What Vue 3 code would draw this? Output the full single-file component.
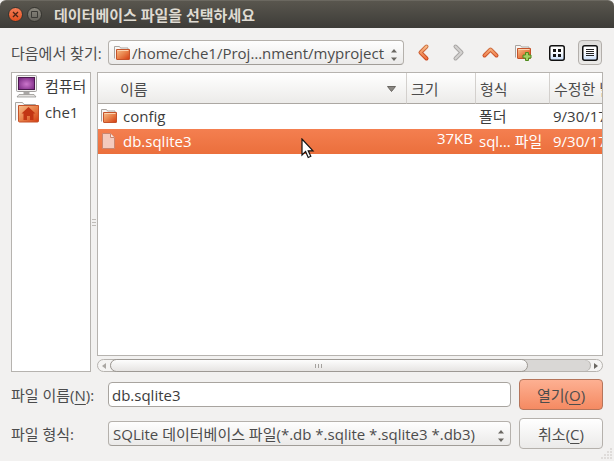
<script setup>
import { ref } from 'vue'

const fileName = ref('db.sqlite3')
const folder = ref('project')
const filter = ref('sqlite')
const selected = ref('db.sqlite3')
const files = [
  { name: 'config', size: '', type: '폴더', date: '9/30/17 2:10 PM', dir: true },
  { name: 'db.sqlite3', size: '37KB', type: 'sql… 파일', date: '9/30/17 2:10 PM', dir: false }
]

function choose(file) {
  selected.value = file.name
  fileName.value = file.name
}
</script>

<template>
  <div class="window">
    <svg class="defs" width="0" height="0" aria-hidden="true">
      <defs>
        <linearGradient id="chevron" gradientUnits="userSpaceOnUse" x1="0" y1="1" x2="0" y2="15">
          <stop offset="0" stop-color="#f9c08c" />
          <stop offset="1" stop-color="#ee6a38" />
        </linearGradient>
        <linearGradient id="chevronEdge" gradientUnits="userSpaceOnUse" x1="0" y1="1" x2="0" y2="15">
          <stop offset="0" stop-color="#cf7546" />
          <stop offset="1" stop-color="#c8431c" />
        </linearGradient>
        <linearGradient id="folderFill" x1="0" y1="0" x2="1" y2="1">
          <stop offset="0" stop-color="#f7bf8c" />
          <stop offset="0.5" stop-color="#e8824a" />
          <stop offset="1" stop-color="#d33a10" />
        </linearGradient>
        <radialGradient id="screen" cx="0.5" cy="0.55" r="0.6">
          <stop offset="0" stop-color="#cc76cc" />
          <stop offset="1" stop-color="#7d2c86" />
        </radialGradient>
        <linearGradient id="page" x1="0" y1="0" x2="0" y2="1">
          <stop offset="0.4" stop-color="#ffffff" />
          <stop offset="1" stop-color="#c9defa" />
        </linearGradient>
        <symbol id="folder" viewBox="0 0 16 16">
          <path d="M.5 13.500v-12h5l1 1.500h7.500v1.500" fill="#f7f6f5" stroke="#a9a5a1" />
          <path d="M2.500 4.500h13v9.500q0 .5-.5.5h-12q-.5 0-.5-.5z" fill="url(#folderFill)" stroke="#c5532a" />
          <path d="M3.500 5.500h11" stroke="#fbd3b0" />
        </symbol>
      </defs>
    </svg>

    <header class="titlebar">
      <button class="dot close" type="button" aria-label="닫기">
        <svg width="7" height="7" viewBox="0 0 7 7"><path d="M1 1l5 5M6 1l-5 5" stroke="#4b2416" stroke-width="1.300" /></svg>
      </button>
      <button class="dot maximize" type="button" aria-label="최대화">
        <svg width="7" height="7" viewBox="0 0 7 7"><path d="M.5.5h6v6h-6z" fill="none" stroke="#3c3b37" /></svg>
      </button>
      <h1>데이터베이스 파일을 선택하세요</h1>
    </header>

    <div class="toolbar">
      <label class="caption" for="folder-select">다음에서 찾기:</label>
      <div class="combo path">
        <svg class="lead" width="16" height="16"><use href="#folder" /></svg>
        <select id="folder-select" v-model="folder">
          <option value="project">/home/che1/Proj…nment/myproject</option>
        </select>
        <svg class="arrows" width="6" height="12" viewBox="0 0 6 12"><path d="M0 3.500L3 0l3 3.500zM0 8.500h6L3 12z" fill="#6a6762" /></svg>
      </div>
      <button class="tool" type="button" aria-label="뒤로">
        <svg width="16" height="16" viewBox="0 0 16 16"><path d="M9.500 1.500L3.500 7.500l6 6" class="edge back" /><path d="M9.500 1.500L3.500 7.500l6 6" class="core back" /></svg>
      </button>
      <button class="tool" type="button" aria-label="앞으로">
        <svg width="16" height="16" viewBox="0 0 16 16"><path d="M5.500 1.500L11.500 7.500l-6 6" class="edge next" /><path d="M5.500 1.500L11.500 7.500l-6 6" class="core next" /></svg>
      </button>
      <button class="tool" type="button" aria-label="상위 폴더">
        <svg width="16" height="16" viewBox="0 0 16 16"><path d="M1.500 10.500L7.500 4.500l6 6" class="edge back" /><path d="M1.500 10.500L7.500 4.500l6 6" class="core back" /></svg>
      </button>
      <button class="tool" type="button" aria-label="새 폴더">
        <svg width="18" height="18" viewBox="0 0 18 18">
          <use href="#folder" width="16" height="16" />
          <path d="M10.500 8.500h3v2.500h2.500v3h-2.500v2.500h-3V14H8v-3h2.500z" fill="#a3cf65" stroke="#4f8a1c" />
        </svg>
      </button>
      <button class="tool" type="button" aria-label="아이콘 보기">
        <svg width="16" height="16" viewBox="0 0 16 16">
          <rect x=".75" y=".75" width="14.500" height="14.500" rx="2" fill="url(#page)" stroke="#111" stroke-width="1.500" />
          <path d="M4 4h3v3H4zM9 4h3v3H9zM4 9h3v3H4zM9 9h3v3H9z" fill="#151515" />
        </svg>
      </button>
      <button class="tool pressed" type="button" aria-label="자세히 보기" aria-pressed="true">
        <svg width="16" height="16" viewBox="0 0 16 16">
          <rect x=".75" y=".75" width="14.500" height="14.500" rx="2" fill="url(#page)" stroke="#111" stroke-width="1.500" />
          <path d="M4 4.500h8M4 6.500h8M4 8.500h8M4 10.500h8" stroke="#222" />
        </svg>
      </button>
    </div>

    <main class="browser">
      <nav class="places">
        <a href="#computer">
          <svg width="24" height="24" viewBox="0 0 24 24">
            <rect x="1.500" y="1.500" width="20" height="16" rx="1" fill="#f1f0ef" stroke="#a3a19f" />
            <rect x="3.500" y="3.500" width="16" height="12" fill="url(#screen)" stroke="#4b174f" />
            <path d="M8.500 18h6v2.500h-6z" fill="#a9a7a5" />
            <path d="M4 20.500h15l2 2.500H2z" fill="#e4e2e0" stroke="#8b8987" stroke-width=".7" />
          </svg>
          <span>컴퓨터</span>
        </a>
        <a href="#home">
          <svg width="24" height="24" viewBox="0 0 24 24">
            <path d="M.5 20.500v-18h7l1.500 2h11.500v3" fill="#f7f6f5" stroke="#a9a5a1" />
            <path d="M3.500 5.500h20V21q0 1-1 1h-18q-1 0-1-1z" fill="url(#folderFill)" stroke="#c5532a" />
            <path d="M13.500 7l7 6.500h-2V20h-3.500v-4h-3v4H8.500v-6.500h-2z" fill="#c23514" />
          </svg>
          <span>che1</span>
        </a>
      </nav>
      <div class="splitter" role="separator"><i></i><i></i><i></i></div>
      <section class="listing">
        <div class="view">
          <table>
            <colgroup><col /><col class="c-size" /><col class="c-type" /><col class="c-date" /></colgroup>
            <thead>
              <tr>
                <th class="first">
                  <div class="sort">이름
                    <svg width="9" height="6" viewBox="0 0 9 6"><path d="M.5.5h8L4.500 5.500z" fill="#8a8783" stroke="#6a6762" /></svg>
                  </div>
                </th>
                <th>크기</th>
                <th>형식</th>
                <th>수정한 날짜</th>
              </tr>
            </thead>
            <tbody>
              <tr v-for="file in files" :key="file.name" :class="{ active: selected === file.name }" @click="choose(file)">
                <td>
                  <div class="entry">
                    <svg v-if="file.dir" width="16" height="16"><use href="#folder" /></svg>
                    <svg v-else width="16" height="16" viewBox="0 0 16 16">
                      <path d="M1.500.5h8l4 4v11h-12z" fill="#f4cabd" stroke="#c98670" />
                      <path d="M9.500.5v4h4" fill="#fae5de" stroke="#c98670" />
                    </svg>
                    <span>{{ file.name }}</span>
                  </div>
                </td>
                <td class="size">{{ file.size }}</td>
                <td>{{ file.type }}</td>
                <td>{{ file.date }}</td>
              </tr>
            </tbody>
          </table>
        </div>
        <div class="scrollbar">
          <button type="button" aria-label="왼쪽"><svg width="4" height="6" viewBox="0 0 4 6"><path d="M4 0v6L0 3z" fill="#aaa7a3" /></svg></button>
          <div class="trough"><div class="thumb"><i></i><i></i><i></i></div></div>
          <button type="button" aria-label="오른쪽"><svg width="4" height="6" viewBox="0 0 4 6"><path d="M0 0v6l4-3z" fill="#6a6762" /></svg></button>
        </div>
      </section>
    </main>

    <form class="form" @submit.prevent>
      <label class="caption" for="file-name">파일 이름(<u>N</u>):</label>
      <input id="file-name" v-model="fileName" type="text" autocomplete="off" spellcheck="false" />
      <button class="action open" type="submit">열기(<u>O</u>)</button>
      <label class="caption" for="file-type">파일 형식:</label>
      <div class="combo">
        <select id="file-type" v-model="filter">
          <option value="sqlite">SQLite 데이터베이스 파일(*.db *.sqlite *.sqlite3 *.db3)</option>
        </select>
        <svg class="arrows" width="6" height="12" viewBox="0 0 6 12"><path d="M0 3.500L3 0l3 3.500zM0 8.500h6L3 12z" fill="#6a6762" /></svg>
      </div>
      <button class="action" type="button">취소(<u>C</u>)</button>
    </form>

    <svg class="grip" width="12" height="12" viewBox="0 0 12 12" aria-hidden="true">
      <path d="M9 1h2v2H9zM6 4h2v2H6zM9 4h2v2H9zM3 7h2v2H3zM6 7h2v2H6zM9 7h2v2H9zM0 10h2v2H0zM3 10h2v2H3zM6 10h2v2H6zM9 10h2v2H9z" fill="#dfdcda" />
    </svg>
    <svg class="pointer" width="14" height="21" viewBox="0 0 14 21" aria-hidden="true">
      <path d="M1 1v16l3.600-3.400L7.200 19.500l2.600-1.200-2.600-5.500H12z" fill="#fff" stroke="#111" stroke-width="1.200" />
    </svg>
  </div>
</template>

<style>
body {
  margin: 0;
  background: #f2f1f0;
}
</style>

<style scoped>
.window {
  position: relative;
  display: flex;
  flex-direction: column;
  height: 100vh;
  background: #f2f1f0;
  color: #4c4c4c;
  font-family: "Open Sans", "Noto Sans CJK KR", sans-serif;
  font-size: 15px;
  line-height: 20px;
}
.window * {
  box-sizing: border-box;
}
.defs {
  position: absolute;
}
button,
input,
select {
  margin: 0;
  padding: 0;
  font: inherit;
  color: inherit;
}
svg {
  display: block;
  flex: none;
}
.titlebar {
  display: flex;
  align-items: center;
  flex: none;
  height: 28px;
  padding-left: 8px;
  gap: 4px;
  border-top: 1px solid #6b6860;
  border-radius: 6px 6px 0 0;
  background: linear-gradient(#59564e, #3d3c38);
}
.titlebar h1 {
  margin: 0 0 0 8px;
  font-size: 15px;
  font-weight: 700;
  color: #dfdbd2;
}
.dot {
  display: flex;
  align-items: center;
  justify-content: center;
  width: 15px;
  height: 15px;
  border: 1px solid #35342f;
  border-radius: 50%;
}
.close {
  background: linear-gradient(#f57e57, #e4501f);
}
.maximize {
  background: linear-gradient(#8a877e, #66645d);
}
.toolbar {
  display: flex;
  align-items: center;
  gap: 9px;
  flex: none;
  padding: 12px 12px 7px 11px;
}
.toolbar .caption {
  width: 88px;
}
.caption {
  white-space: nowrap;
}
.combo {
  display: flex;
  align-items: center;
  min-width: 0;
  height: 25px;
  padding: 0 6px 0 4px;
  border: 1px solid #b5b1ac;
  border-bottom-color: #a19d98;
  border-radius: 4px;
  background: linear-gradient(#fefefe, #ebeae9);
}
.path {
  flex: 1;
  padding-left: 5px;
  gap: 2px;
}
.combo select {
  flex: 1;
  min-width: 0;
  height: 23px;
  border: 0;
  background: none;
  appearance: none;
  outline: none;
}
.arrows {
  align-self: flex-end;
  margin-bottom: 3px;
}
.tool {
  display: flex;
  align-items: center;
  justify-content: center;
  flex: none;
  width: 24px;
  height: 25px;
  padding-top: 1px;
  border: 1px solid transparent;
  border-radius: 4px;
  background: none;
}
.pressed {
  border-color: #b3afab;
  background: linear-gradient(#dfddda, #ebeae8);
}
.edge,
.core {
  fill: none;
  stroke-linecap: round;
  stroke-linejoin: round;
}
.edge {
  stroke-width: 4;
}
.core {
  stroke-width: 2;
}
.tool svg {
  overflow: visible;
}
.edge.back {
  stroke: url(#chevronEdge);
}
.core.back {
  stroke: url(#chevron);
}
.edge.next {
  stroke: #a9a7a5;
}
.core.next {
  stroke: #d3d1cf;
}
.browser {
  display: flex;
  flex: 1;
  min-height: 0;
  padding: 0 11px;
}
.places {
  flex: none;
  width: 80px;
  border: 1px solid #b6b3af;
  background: #fff;
}
.places a {
  display: flex;
  align-items: center;
  gap: 6px;
  height: 26px;
  padding-left: 3px;
  color: #3c3c3c;
  text-decoration: none;
  white-space: nowrap;
}
.splitter {
  display: flex;
  flex-direction: column;
  align-items: center;
  justify-content: center;
  gap: 2px;
  flex: none;
  width: 6px;
}
.splitter i {
  width: 4px;
  height: 1px;
  background: #bfbcb8;
}
.listing {
  display: flex;
  flex-direction: column;
  gap: 3px;
  flex: 1;
  min-width: 0;
}
.view {
  flex: 1;
  min-height: 0;
  overflow: hidden;
  border: 1px solid #b6b3af;
  background: #fff;
}
table {
  width: calc(100% + 68px);
  table-layout: fixed;
  border-collapse: separate;
  border-spacing: 0;
  color: #3c3c3c;
}
.c-size {
  width: 69px;
}
.c-type {
  width: 74px;
}
.c-date {
  width: 120px;
}
th {
  height: 31px;
  padding: 1px 4px 0;
  border-right: 1px solid #d3d0cd;
  border-bottom: 1px solid #aca8a3;
  background: linear-gradient(#fff, #ecebe9);
  color: #4c4c4c;
  font-weight: 400;
  text-align: left;
  white-space: nowrap;
}
th.first {
  padding: 1px 10px 0 22px;
}
.sort {
  display: flex;
  align-items: center;
  justify-content: space-between;
}
td {
  height: 25px;
  padding: 0 3px 1px;
  white-space: nowrap;
}
td.size {
  padding: 0 3px 8px;
  text-align: right;
  line-height: 16px;
}
.entry {
  display: flex;
  align-items: center;
  gap: 6px;
}
.active {
  background: linear-gradient(#f47f50, #eb6f3c);
  color: #fff;
}
.scrollbar {
  display: flex;
  flex: none;
  height: 13px;
  border: 1px solid #b6b3af;
  border-radius: 7px;
  background: #f5f4f3;
}
.scrollbar button {
  display: flex;
  align-items: center;
  justify-content: center;
  flex: none;
  width: 12px;
  border: 0;
  background: none;
}
.trough {
  flex: 1;
  border-radius: 6px;
  background: #d9d7d5;
  box-shadow: 1px 0 #b6b3af;
}
.thumb {
  display: flex;
  align-items: center;
  justify-content: center;
  gap: 2px;
  width: 87%;
  height: 13px;
  margin-top: -1px;
  border: 1px solid #9d9994;
  border-radius: 7px;
  background: linear-gradient(#fdfdfd, #e6e4e2);
}
.thumb i {
  width: 1px;
  height: 4px;
  background: #a5a29e;
}
.form {
  display: grid;
  grid-template-columns: 89px 1fr 84px;
  align-items: center;
  gap: 8px;
  flex: none;
  padding: 7px 11px 12px;
}
.form input {
  min-width: 0;
  height: 25px;
  padding: 0 3px;
  border: 1px solid #a8a49f;
  border-radius: 4px;
  background: #fff;
  color: #3c3c3c;
  outline: none;
}
.action {
  height: 31px;
  border: 1px solid #b5b1ac;
  border-radius: 4px;
  background: linear-gradient(#ffffff, #ebeae9);
}
.open {
  border-color: #b5755b;
  background: linear-gradient(#fdb092, #f58a62);
}
u {
  text-underline-offset: 3px;
}
.grip {
  position: absolute;
  right: 1px;
  bottom: 2px;
}
.pointer {
  position: absolute;
  left: 301px;
  top: 138px;
}
</style>
